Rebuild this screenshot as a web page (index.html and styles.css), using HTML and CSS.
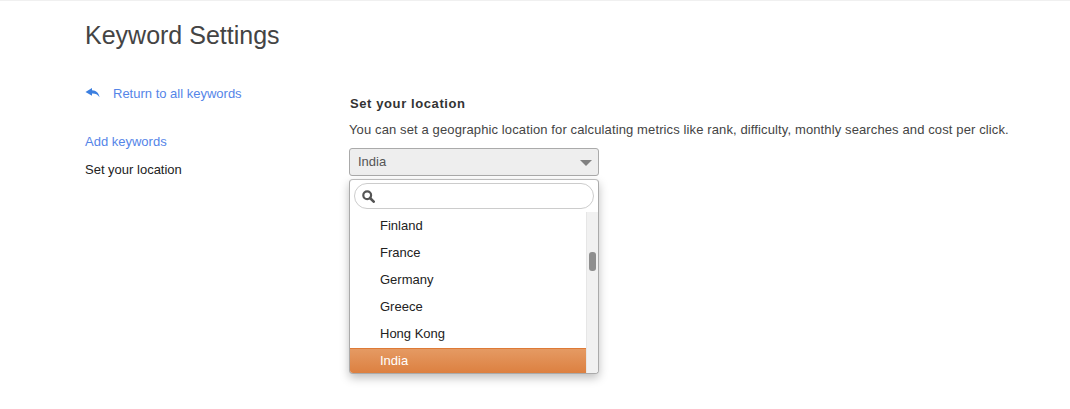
FILE: index.html
```html
<!DOCTYPE html>
<html lang="en">
<head>
<meta charset="utf-8">
<title>Keyword Settings</title>
<link rel="stylesheet" href="styles.css">
</head>
<body>
<div class="page">
  <h1 class="title">Keyword Settings</h1>
  <div class="columns">
    <nav class="side">
      <a class="back" href="#">
        <svg class="back-icon" width="15" height="10" viewBox="0 0 15 10"><path d="M7 0 L0.5 3.9 L7 7.8 V5.6 C10 5.4 12.6 6.4 14.5 9.2 C14 5.2 11.2 2.4 7 2.2 Z" fill="#3b7fe0"/></svg>
        <span>Return to all keywords</span>
      </a>
      <a class="side-link" href="#">Add keywords</a>
      <span class="side-current">Set your location</span>
    </nav>
    <main class="content">
      <h2 class="heading">Set your location</h2>
      <p class="desc">You can set a geographic location for calculating metrics like rank, difficulty, monthly searches and cost per click.</p>
      <div class="select">
        <span>India</span>
        <i class="caret"></i>
      </div>
      <div class="drop">
        <div class="search">
          <svg width="13" height="13" viewBox="0 0 13 13"><circle cx="5.2" cy="5.2" r="3.9" fill="none" stroke="#555" stroke-width="2.2"/><path d="M8 8 L11.7 11.7" stroke="#555" stroke-width="2.6" stroke-linecap="round"/></svg>
        </div>
        <div class="list-wrap">
          <ul class="list">
            <li>Finland</li>
            <li>France</li>
            <li>Germany</li>
            <li>Greece</li>
            <li>Hong Kong</li>
            <li class="active">India</li>
          </ul>
          <div class="track"><div class="thumb"></div></div>
        </div>
      </div>
    </main>
  </div>
</div>
</body>
</html>
```
FILE: styles.css
```css
* { box-sizing: border-box; }
html, body { margin: 0; height: 100%; background: #fff; overflow: hidden; }
body { font-family: "Liberation Sans", Arial, sans-serif; font-size: 13px; color: #333; }
.page { border-top: 1px solid #f0f0f0; padding: 0 0 0 85px; height: 409px; }
.title { margin: 0; padding-top: 19px; font-size: 25px; line-height: 30px; font-weight: 400; color: #444; }
.columns { display: flex; margin-top: 34px; }
.side { width: 264px; flex: none; display: flex; flex-direction: column; }
.back { display: flex; align-items: center; height: 18px; color: #5585e8; text-decoration: none; }
.back-icon { margin-right: 13px; margin-top: -1px; }
.side-link { margin-top: 31px; line-height: 18px; color: #5585e8; text-decoration: none; }
.side-current { margin-top: 10px; line-height: 18px; color: #222; }
.content { width: 680px; padding-top: 11px; }
.heading { margin: 0 0 0 1px; font-size: 13px; line-height: 18px; font-weight: 700; color: #333; letter-spacing: .6px; }
.desc { margin: 8px 0 0; line-height: 18px; color: #444; white-space: nowrap; letter-spacing: .12px; }
.select { margin-top: 9px; width: 250px; height: 28px; display: flex; align-items: center; justify-content: space-between; padding: 0 6px 2px 8px; background: #eee; border: 1px solid #aaa; border-radius: 3px; color: #555; }
.caret { width: 0; height: 0; border-left: 6px solid transparent; border-right: 6px solid transparent; border-top: 6px solid #808080; margin-top: 3px; }
.drop { margin-top: 3px; width: 250px; height: 195px; background: #fff; border: 1px solid #aaa; border-top-color: #bbb; border-radius: 4px; box-shadow: 0 4px 10px rgba(0,0,0,.25); overflow: hidden; }
.search { margin: 3px 4px 0; height: 26px; width: 240px; border: 1px solid #ccc; border-radius: 13px; display: flex; align-items: center; padding-left: 7px; }
.list-wrap { display: flex; margin-top: 3px; height: 163px; }
.list { list-style: none; margin: 0; padding: 0; width: 236px; flex: none; }
.list li { height: 27px; line-height: 27px; padding-left: 30px; color: #222; }
.list li.active { height: 26px; margin-top: 1px; color: #fff; background: linear-gradient(#e59a63, #dc7f3f); border-top: 1px solid #de7a36; line-height: 23px; }
.track { flex: 1; background: #f1f1f1; border-left: 1px solid #e6e6e6; display: flex; justify-content: center; padding-top: 40px; }
.thumb { width: 7px; height: 19px; border-radius: 3px; background: #8f8f8f; }
```
